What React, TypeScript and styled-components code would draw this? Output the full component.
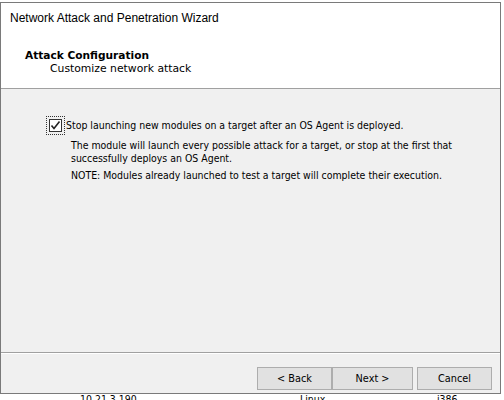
import React from "react";
import styled, { createGlobalStyle } from "styled-components";

const GlobalStyle = createGlobalStyle`
  html, body { margin: 0; padding: 0; background: #ffffff; }
  body { overflow: hidden; }
  * { box-sizing: border-box; }
`;

const Page = styled.div`
  width: 504px;
  height: 400px;
  overflow: hidden;
  background: #ffffff;
  padding-top: 2px;
  font-family: "DejaVu Sans Condensed", "DejaVu Sans", sans-serif;
  font-size: 10.45px;
  color: #000;
`;

const Window = styled.div`
  width: 501px;
  height: 392px;
  border: 1px solid #7a7a7a;
  background: #f0f0f0;
  display: flex;
  flex-direction: column;
`;

const TitleBar = styled.div`
  height: 29px;
  background: #ffffff;
  display: flex;
  align-items: center;
  padding-left: 9px;
  padding-top: 1px;
  font-family: "Liberation Sans", Arial, sans-serif;
  font-size: 12px;
  color: #000;
`;

const Header = styled.div`
  height: 57px;
  background: #ffffff;
  border-bottom: 1px solid #a0a0a0;
  padding: 17px 0 0 24px;
  display: flex;
  flex-direction: column;
  line-height: 13px;
`;

const HeaderTitle = styled.div`
  font-family: "DejaVu Sans", sans-serif;
  font-size: 10.6px;
  font-weight: bold;
`;

const HeaderSubtitle = styled.div`
  padding-left: 25px;
  font-family: "DejaVu Sans", sans-serif;
  font-size: 10.8px;
`;

const Body = styled.div`
  flex: 1;
  padding: 27px 0 0 45px;
  display: flex;
  flex-direction: column;
  border-bottom: 1px solid #a0a0a0;
  box-shadow: 0 1px 0 #ffffff;
`;

const CheckRow = styled.label`
  display: flex;
  align-items: center;
  gap: 1px;
  line-height: 13px;
`;

const Focus = styled.span`
  display: inline-flex;
  padding: 2px;
  border: 1px dotted #333;
`;

const Box = styled.span`
  width: 13px;
  height: 13px;
  border: 1px solid #333333;
  background: #ffffff;
  display: inline-flex;
  align-items: center;
  justify-content: center;
`;

const Desc = styled.div<{ $gap: number }>`
  padding-left: 25px;
  margin-top: ${(p) => p.$gap}px;
  line-height: 13px;
`;

const Footer = styled.div`
  height: 40px;
  display: flex;
  justify-content: flex-end;
  align-items: flex-start;
  padding: 14px 8px 0 0;
`;

const Button = styled.button<{ $width?: number; $gapLeft?: number }>`
  width: ${(p) => p.$width ?? 75}px;
  height: 23px;
  margin-left: ${(p) => p.$gapLeft ?? 0}px;
  background: #e1e1e1;
  border: 1px solid #adadad;
  font-family: "DejaVu Sans Condensed", "DejaVu Sans", sans-serif;
  font-size: 10.8px;
  color: #000;
  padding: 0;
`;

const BehindRow = styled.div`
  display: grid;
  grid-template-columns: 80px 220px 137px 1fr;
  line-height: 13px;
  margin-top: -1px;
  font-family: "DejaVu Sans Condensed", "DejaVu Sans", sans-serif;
  font-size: 10.45px;
`;

export default function App() {
  return (
    <>
      <GlobalStyle />
      <Page>
        <Window>
          <TitleBar>Network Attack and Penetration Wizard</TitleBar>
          <Header>
            <HeaderTitle>Attack Configuration</HeaderTitle>
            <HeaderSubtitle>Customize network attack</HeaderSubtitle>
          </Header>
          <Body>
            <CheckRow>
              <Focus>
                <Box>
                  <svg width="11" height="11" viewBox="0 0 11 11">
                    <path d="M1.5 5.5 L4 8.5 L9.5 1.5" fill="none" stroke="#222" strokeWidth="1.6" />
                  </svg>
                </Box>
              </Focus>
              Stop launching new modules on a target after an OS Agent is deployed.
            </CheckRow>
            <Desc $gap={4}>
              The module will launch every possible attack for a target, or stop at the first that
              <br />
              successfully deploys an OS Agent.
            </Desc>
            <Desc $gap={4}>NOTE: Modules already launched to test a target will complete their execution.</Desc>
          </Body>
          <Footer>
            <Button>&lt; Back</Button>
            <Button $width={81}>Next &gt;</Button>
            <Button $gapLeft={4}>Cancel</Button>
          </Footer>
        </Window>
        <BehindRow>
          <span />
          <span>10.21.3.190</span>
          <span>Linux</span>
          <span>i386</span>
        </BehindRow>
      </Page>
    </>
  );
}
